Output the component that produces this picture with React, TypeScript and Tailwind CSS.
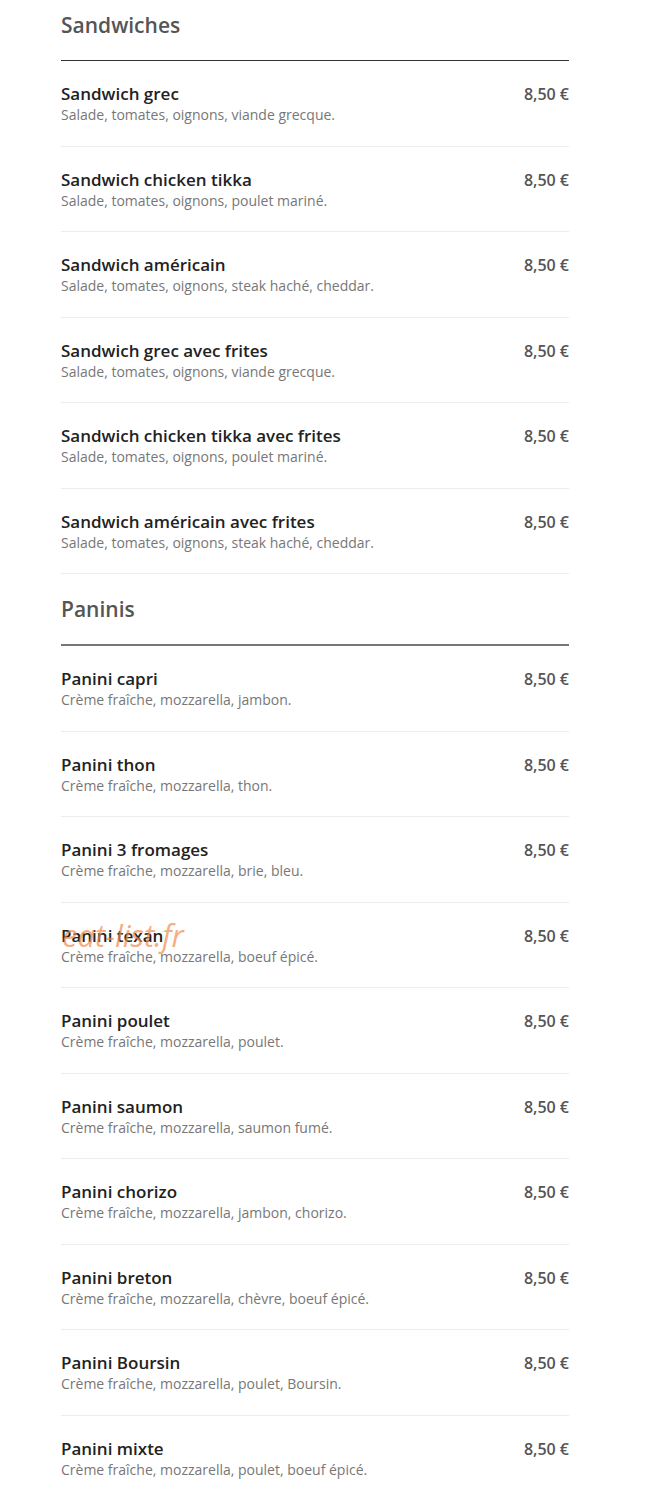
import React from "react";

type Item = { name: string; desc: string; price: string };

const sandwiches: Item[] = [
  { name: "Sandwich grec", desc: "Salade, tomates, oignons, viande grecque.", price: "8,50 €" },
  { name: "Sandwich chicken tikka", desc: "Salade, tomates, oignons, poulet mariné.", price: "8,50 €" },
  { name: "Sandwich américain", desc: "Salade, tomates, oignons, steak haché, cheddar.", price: "8,50 €" },
  { name: "Sandwich grec avec frites", desc: "Salade, tomates, oignons, viande grecque.", price: "8,50 €" },
  { name: "Sandwich chicken tikka avec frites", desc: "Salade, tomates, oignons, poulet mariné.", price: "8,50 €" },
  { name: "Sandwich américain avec frites", desc: "Salade, tomates, oignons, steak haché, cheddar.", price: "8,50 €" },
];

const paninis: Item[] = [
  { name: "Panini capri", desc: "Crème fraîche, mozzarella, jambon.", price: "8,50 €" },
  { name: "Panini thon", desc: "Crème fraîche, mozzarella, thon.", price: "8,50 €" },
  { name: "Panini 3 fromages", desc: "Crème fraîche, mozzarella, brie, bleu.", price: "8,50 €" },
  { name: "Panini texan", desc: "Crème fraîche, mozzarella, boeuf épicé.", price: "8,50 €" },
  { name: "Panini poulet", desc: "Crème fraîche, mozzarella, poulet.", price: "8,50 €" },
  { name: "Panini saumon", desc: "Crème fraîche, mozzarella, saumon fumé.", price: "8,50 €" },
  { name: "Panini chorizo", desc: "Crème fraîche, mozzarella, jambon, chorizo.", price: "8,50 €" },
  { name: "Panini breton", desc: "Crème fraîche, mozzarella, chèvre, boeuf épicé.", price: "8,50 €" },
  { name: "Panini Boursin", desc: "Crème fraîche, mozzarella, poulet, Boursin.", price: "8,50 €" },
  { name: "Panini mixte", desc: "Crème fraîche, mozzarella, poulet, boeuf épicé.", price: "8,50 €" },
];

const MenuRow = ({ item, watermark }: { item: Item; watermark?: boolean }) => (
  <div className="relative flex items-start justify-between border-b border-[#ececec] pt-[22px] pb-[20.5px]">
    <div>
      <div className="text-[17px] font-semibold leading-[22px] text-[#222]">{item.name}</div>
      <div className="text-[14px] leading-[20px] text-[#777]">{item.desc}</div>
    </div>
    <div className="text-[16px] font-semibold leading-[22px] text-[#555]">{item.price}</div>
    {watermark && (
      <span className="absolute left-px top-[15px] text-[31px] italic leading-[34px] text-[#f08a4b]/70">
        eat-list.fr
      </span>
    )}
  </div>
);

const Section = ({ title, items, thick }: { title: string; items: Item[]; thick?: boolean }) => (
  <section className={thick ? "pt-[10px]" : ""}>
    <h2 className="pt-[11px] pb-[21px] text-[21px] font-semibold leading-[28px] text-[#555]">{title}</h2>
    <div className={thick ? "h-[2px] bg-[#777]" : "h-px bg-[#333]"} />
    {items.map((it) => (
      <MenuRow key={it.name} item={it} watermark={it.name === "Panini texan"} />
    ))}
  </section>
);

export default function App() {
  return (
    <div className="min-h-screen bg-white" style={{ fontFamily: '"Open Sans", "Noto Sans", sans-serif' }}>
      <div className="ml-[61px] w-[508px]">
        <Section title="Sandwiches" items={sandwiches} />
        <Section title="Paninis" items={paninis} thick />
      </div>
    </div>
  );
}
